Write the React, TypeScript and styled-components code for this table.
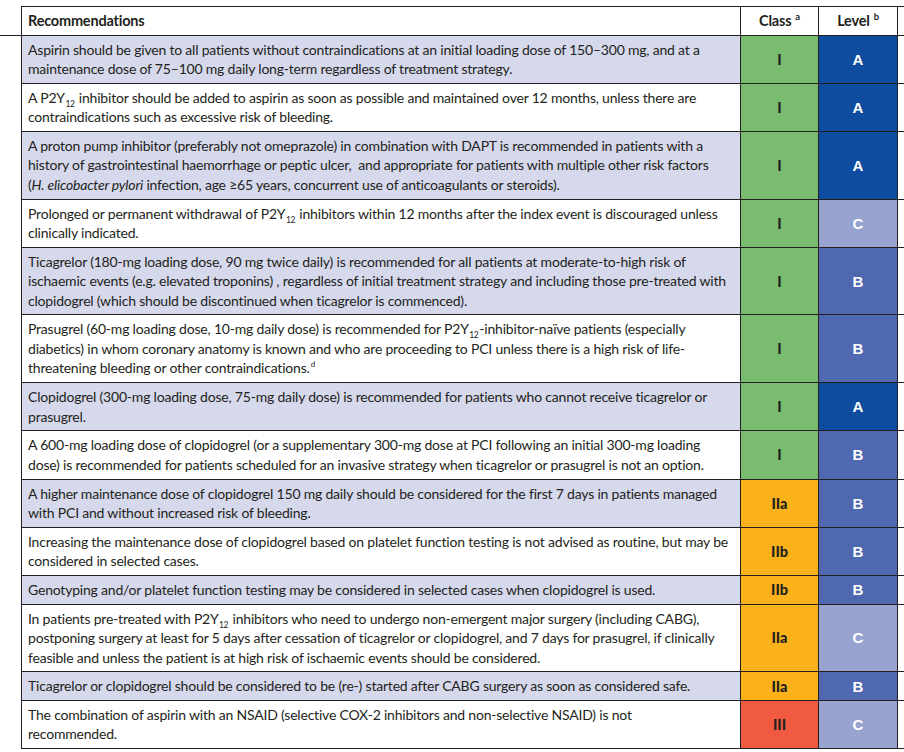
import React from "react";
import styled, { createGlobalStyle } from "styled-components";

const GlobalStyle = createGlobalStyle`
  html, body {
    margin: 0;
    padding: 0;
    background: #ffffff;
    overflow: hidden;
  }
  body {
    font-family: "Lato", "Liberation Sans", sans-serif;
    color: #231f20;
  }
`;

const LINE = "#231f20";
const COLS = "719px 78px 79px 7px";

const Page = styled.div`
  padding: 6px 0 0 21px;
  width: 904px;
  box-sizing: border-box;
`;

const Table = styled.div`
  position: relative;
  display: flex;
  flex-direction: column;
  width: 884px;
  border-top: 1px solid ${LINE};
  border-left: 1px solid ${LINE};
`;

const Row = styled.div<{ $head?: boolean }>`
  position: relative;
  display: grid;
  grid-template-columns: ${COLS};
  border-bottom: 1px solid ${LINE};

  ${(p) =>
    p.$head &&
    `
    &::before {
      content: "";
      position: absolute;
      left: -22px;
      bottom: -1px;
      width: 22px;
      height: 1px;
      background: ${LINE};
    }
  `}
`;

const TextCell = styled.div<{ $shade?: boolean }>`
  background: ${(p) => (p.$shade ? "#d6d8ec" : "#ffffff")};
  border-right: 1px solid ${LINE};
  padding: 4px 6px 4.2px 6px;
  font-size: 14px;
  letter-spacing: -0.2px;
  line-height: 19.5px;
  white-space: pre;
  overflow: hidden;
`;

const HeadText = styled(TextCell)`
  font-weight: 700;
  font-size: 14.5px;
  padding-top: 4px;
  padding-bottom: 4px;
`;

const HeadCell = styled.div`
  border-right: 1px solid ${LINE};
  display: flex;
  align-items: center;
  justify-content: center;
`;

const HeadLabel = styled.span`
  font-weight: 700;
  font-size: 14.5px;
  letter-spacing: -0.2px;
  line-height: 19.5px;
`;

const classColors: Record<string, string> = {
  I: "#79bb6f",
  IIa: "#fbb119",
  IIb: "#fbb119",
  III: "#f05a41",
};

const levelColors: Record<string, string> = {
  A: "#0d4c9e",
  B: "#5068b0",
  C: "#98a3d0",
};

const ClassCell = styled.div<{ $cls: string }>`
  background: ${(p) => classColors[p.$cls]};
  border-right: 1px solid ${LINE};
  display: flex;
  align-items: center;
  justify-content: center;
  font-weight: 900;
  font-size: 14.5px;
  color: #231f20;
`;

const LevelCell = styled.div<{ $lvl: string }>`
  background: ${(p) => levelColors[p.$lvl]};
  border-right: 1px solid ${LINE};
  display: flex;
  align-items: center;
  justify-content: center;
  font-family: "Liberation Sans", "Arial", sans-serif;
  font-weight: 700;
  font-size: 15px;
  color: #ffffff;
`;

const Stub = styled.div`
  background: #ffffff;
`;

const Sub = styled.sub`
  font-size: 8.5px;
  line-height: 0;
  vertical-align: -4px;
  letter-spacing: -0.4px;
  margin-left: 0.5px;
  margin-right: 1px;
`;

const Sup = styled.sup`
  font-size: 9.5px;
  line-height: 0;
  vertical-align: 6px;
  margin-left: 4px;
  font-weight: 700;
`;

const SupNote = styled.sup`
  font-size: 8px;
  line-height: 0;
  vertical-align: 6px;
  margin-left: 1px;
`;

const P2Y = () => (
  <>
    P2Y<Sub>12</Sub>
  </>
);

type Rec = {
  lines: React.ReactNode[];
  cls: string;
  lvl: string;
};

const recs: Rec[] = [
  {
    lines: [
      "Aspirin should be given to all patients without contraindications at an initial loading dose of 150–300 mg, and at a",
      "maintenance dose of 75–100 mg daily long-term regardless of treatment strategy.",
    ],
    cls: "I",
    lvl: "A",
  },
  {
    lines: [
      <>
        A <P2Y /> inhibitor should be added to aspirin as soon as possible and maintained over 12 months, unless there are
      </>,
      "contraindications such as excessive risk of bleeding.",
    ],
    cls: "I",
    lvl: "A",
  },
  {
    lines: [
      "A proton pump inhibitor (preferably not omeprazole) in combination with DAPT is recommended in patients with a",
      "history of gastrointestinal haemorrhage or peptic ulcer,  and appropriate for patients with multiple other risk factors",
      <>
        (<i>H. elicobacter pylori</i> infection, age ≥65 years, concurrent use of anticoagulants or steroids).
      </>,
    ],
    cls: "I",
    lvl: "A",
  },
  {
    lines: [
      <>
        Prolonged or permanent withdrawal of <P2Y /> inhibitors within 12 months after the index event is discouraged unless
      </>,
      "clinically indicated.",
    ],
    cls: "I",
    lvl: "C",
  },
  {
    lines: [
      "Ticagrelor (180-mg loading dose, 90 mg twice daily) is recommended for all patients at moderate-to-high risk of",
      "ischaemic events (e.g. elevated troponins) , regardless of initial treatment strategy and including those pre-treated with",
      "clopidogrel (which should be discontinued when ticagrelor is commenced).",
    ],
    cls: "I",
    lvl: "B",
  },
  {
    lines: [
      <>
        Prasugrel (60-mg loading dose, 10-mg daily dose) is recommended for <P2Y />-inhibitor-naïve patients (especially
      </>,
      "diabetics) in whom coronary anatomy is known and who are proceeding to PCI unless there is a high risk of life-",
      <>
        threatening bleeding or other contraindications.<SupNote>d</SupNote>
      </>,
    ],
    cls: "I",
    lvl: "B",
  },
  {
    lines: [
      "Clopidogrel (300-mg loading dose, 75-mg daily dose) is recommended for patients who cannot receive ticagrelor or",
      "prasugrel.",
    ],
    cls: "I",
    lvl: "A",
  },
  {
    lines: [
      "A 600-mg loading dose of clopidogrel (or a supplementary 300-mg dose at PCI following an initial 300-mg loading",
      "dose) is recommended for patients scheduled for an invasive strategy when ticagrelor or prasugrel is not an option.",
    ],
    cls: "I",
    lvl: "B",
  },
  {
    lines: [
      "A higher maintenance dose of clopidogrel 150 mg daily should be considered for the first 7 days in patients managed",
      "with PCI and without increased risk of bleeding.",
    ],
    cls: "IIa",
    lvl: "B",
  },
  {
    lines: [
      "Increasing the maintenance dose of clopidogrel based on platelet function testing is not advised as routine, but may be",
      "considered in selected cases.",
    ],
    cls: "IIb",
    lvl: "B",
  },
  {
    lines: ["Genotyping and/or platelet function testing may be considered in selected cases when clopidogrel is used."],
    cls: "IIb",
    lvl: "B",
  },
  {
    lines: [
      <>
        In patients pre-treated with <P2Y /> inhibitors who need to undergo non-emergent major surgery (including CABG),
      </>,
      "postponing surgery at least for 5 days after cessation of ticagrelor or clopidogrel, and 7 days for prasugrel, if clinically",
      "feasible and unless the patient is at high risk of ischaemic events should be considered.",
    ],
    cls: "IIa",
    lvl: "C",
  },
  {
    lines: ["Ticagrelor or clopidogrel should be considered to be (re-) started after CABG surgery as soon as considered safe."],
    cls: "IIa",
    lvl: "B",
  },
  {
    lines: [
      "The combination of aspirin with an NSAID (selective COX-2 inhibitors and non-selective NSAID) is not",
      "recommended.",
    ],
    cls: "III",
    lvl: "C",
  },
];

export default function App() {
  return (
    <>
      <GlobalStyle />
      <Page>
        <Table>
          <Row $head>
            <HeadText>Recommendations</HeadText>
            <HeadCell>
              <HeadLabel>
                Class<Sup>a</Sup>
              </HeadLabel>
            </HeadCell>
            <HeadCell>
              <HeadLabel>
                Level<Sup>b</Sup>
              </HeadLabel>
            </HeadCell>
            <Stub />
          </Row>
          {recs.map((r, i) => (
            <Row key={i}>
              <TextCell $shade={i % 2 === 0}>
                {r.lines.map((l, j) => (
                  <React.Fragment key={j}>
                    {j > 0 && <br />}
                    {l}
                  </React.Fragment>
                ))}
              </TextCell>
              <ClassCell $cls={r.cls}>{r.cls}</ClassCell>
              <LevelCell $lvl={r.lvl}>{r.lvl}</LevelCell>
              <Stub />
            </Row>
          ))}
        </Table>
      </Page>
    </>
  );
}
